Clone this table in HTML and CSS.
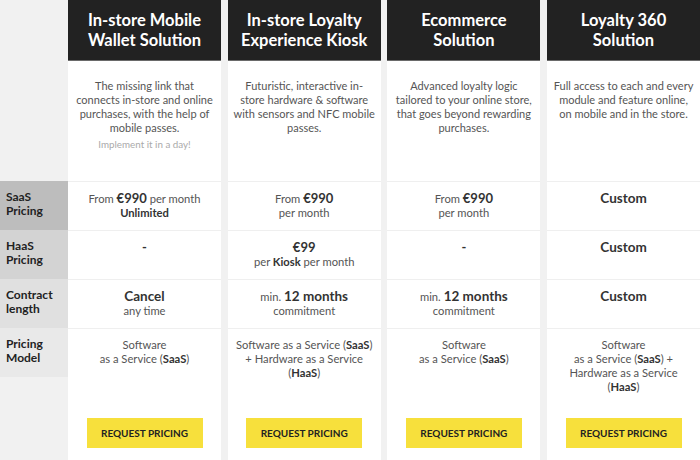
FILE: index.html
```html
<!DOCTYPE html>
<html lang="en">
<head>
<meta charset="utf-8">
<title>Pricing</title>
<link rel="stylesheet" href="styles.css">
</head>
<body>
<div class="table">
  <div class="labels">
    <div class="label-spacer"></div>
    <div class="label l1">SaaS<br>Pricing</div>
    <div class="label l2">HaaS<br>Pricing</div>
    <div class="label l3">Contract<br>length</div>
    <div class="label l4">Pricing<br>Model</div>
  </div>
  <div class="cols">
    <div class="col">
      <div class="head">In-store Mobile<br>Wallet Solution</div>
      <div class="desc">The missing link that connects in-store and online purchases, with the help of mobile passes.<div class="note">Implement it in a day!</div></div>
      <div class="row">From <b class="big">€990</b> per month<br><b>Unlimited</b></div>
      <div class="row"><b class="big">-</b></div>
      <div class="row"><b class="big2">Cancel</b><br>any time</div>
      <div class="row last">Software<br>as a Service (<b>SaaS</b>)</div>
      <div class="foot"><a class="btn" href="#">REQUEST PRICING</a></div>
    </div>
    <div class="col">
      <div class="head">In-store Loyalty<br>Experience Kiosk</div>
      <div class="desc">Futuristic, interactive in-store hardware &amp; software with sensors and NFC mobile passes.</div>
      <div class="row">From <b class="big">€990</b><br>per month</div>
      <div class="row"><b class="big">€99</b><br>per <b>Kiosk</b> per month</div>
      <div class="row">min. <b class="big2">12 months</b><br>commitment</div>
      <div class="row last">Software as a Service (<b>SaaS</b>)<br>+ Hardware as a Service<br>(<b>HaaS</b>)</div>
      <div class="foot"><a class="btn" href="#">REQUEST PRICING</a></div>
    </div>
    <div class="col">
      <div class="head">Ecommerce<br>Solution</div>
      <div class="desc">Advanced loyalty logic tailored to your online store, that goes beyond rewarding purchases.</div>
      <div class="row">From <b class="big">€990</b><br>per month</div>
      <div class="row"><b class="big">-</b></div>
      <div class="row">min. <b class="big2">12 months</b><br>commitment</div>
      <div class="row last">Software<br>as a Service (<b>SaaS</b>)</div>
      <div class="foot"><a class="btn" href="#">REQUEST PRICING</a></div>
    </div>
    <div class="col">
      <div class="head">Loyalty 360<br>Solution</div>
      <div class="desc">Full access to each and every module and feature online, on mobile and in the store.</div>
      <div class="row"><b class="big2">Custom</b></div>
      <div class="row"><b class="big2">Custom</b></div>
      <div class="row"><b class="big2">Custom</b></div>
      <div class="row last">Software<br>as a Service (<b>SaaS</b>) +<br>Hardware as a Service<br>(<b>HaaS</b>)</div>
      <div class="foot"><a class="btn" href="#">REQUEST PRICING</a></div>
    </div>
  </div>
</div>
</body>
</html>
```
FILE: styles.css
```css
html, body {
  margin: 0;
  padding: 0;
}
body {
  width: 700px;
  height: 460px;
  overflow: hidden;
  background: #f1f1f1;
  font-family: Lato, "Open Sans", "Liberation Sans", sans-serif;
  color: #555;
}
.table {
  display: flex;
  height: 460px;
}
.labels {
  width: 68px;
  flex: none;
  display: flex;
  flex-direction: column;
}
.label-spacer {
  height: 181px;
}
.label {
  height: 49px;
  box-sizing: border-box;
  padding: 9px 0 0 6px;
  font-size: 12px;
  line-height: 14px;
  font-weight: 700;
  color: #222;
}
.l1 { background: #bdbdbd; }
.l2 { background: #d3d3d3; }
.l3 { background: #e0e0e0; }
.l4 { background: #e9e9e9; }
.cols {
  flex: 1;
  display: flex;
  gap: 6.67px;
}
.col {
  flex: 1;
  min-width: 0;
  background: #fff;
  display: flex;
  flex-direction: column;
  text-align: center;
}
.head {
  height: 60px;
  border-bottom: 1px solid #6a6a6a;
  background: #222;
  color: #fff;
  font-weight: 700;
  font-size: 16.5px;
  line-height: 20px;
  display: flex;
  align-items: center;
  justify-content: center;
}
.desc {
  height: 120px;
  box-sizing: border-box;
  padding: 18px 5.5px 0;
  font-size: 11px;
  line-height: 14px;
  color: #555;
}
.note {
  margin-top: 2px;
  font-size: 9.8px;
  line-height: 14px;
  color: #aaa;
}
.row {
  height: 49px;
  box-sizing: border-box;
  border-top: 1px solid #efefef;
  padding-top: 9px;
  font-size: 11.2px;
  line-height: 14px;
  color: #555;
}
.row b {
  color: #333;
  font-weight: 700;
}
.row b.big {
  font-size: 13px;
}
.row b.big2 {
  font-size: 13.5px;
}
.row.last {
  height: auto;
  flex: 1;
}
.foot {
  display: flex;
  justify-content: center;
  padding-bottom: 12px;
}
.btn {
  display: block;
  width: 116px;
  height: 30px;
  box-sizing: border-box;
  background: #f7e03c;
  color: #222;
  font-size: 10px;
  font-weight: 700;
  line-height: 30px;
  text-align: center;
  text-decoration: none;
}
```
